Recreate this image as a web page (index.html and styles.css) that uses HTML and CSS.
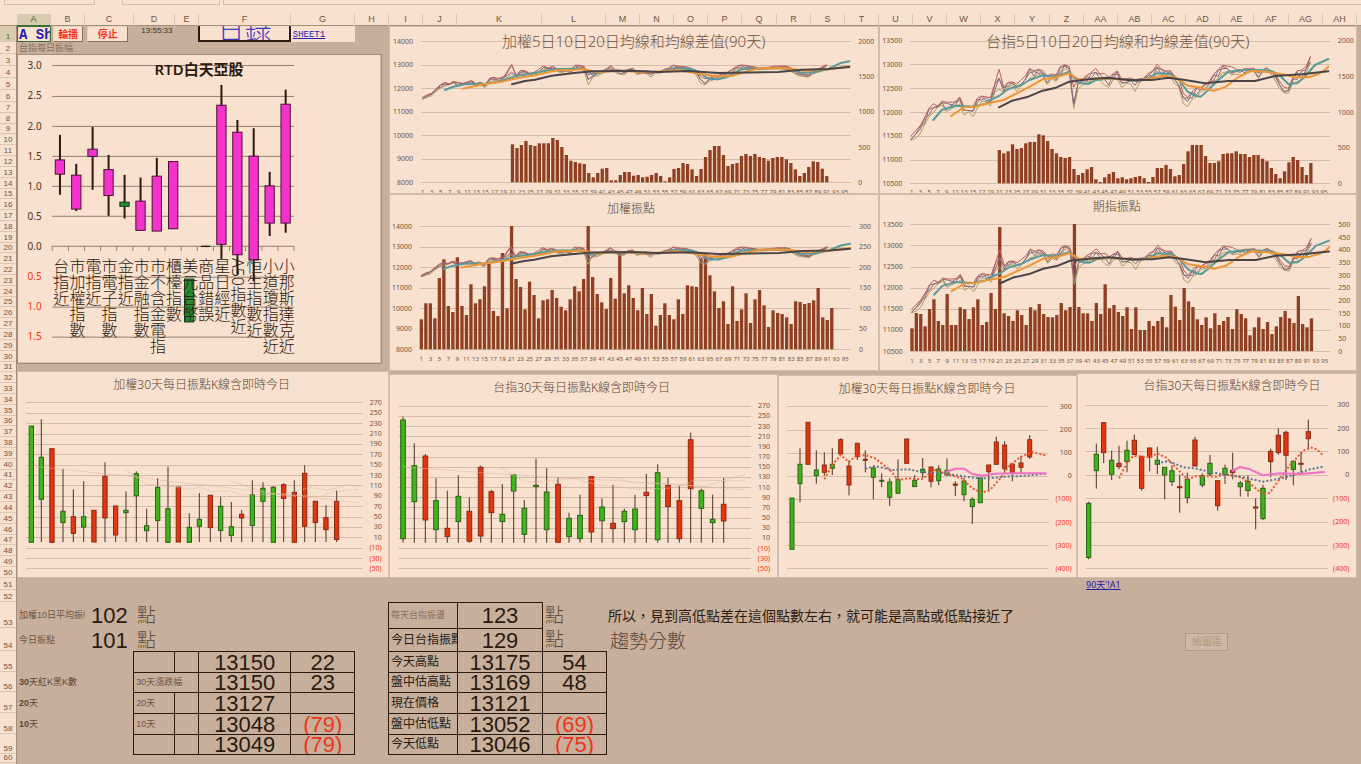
FILE: index.html
```html
<!DOCTYPE html>
<html lang="zh-Hant">
	<head>
		<meta charset="UTF-8" />
		<meta name="viewport" content="width=device-width, initial-scale=1.0" />
		<title>台指每日振幅</title>
		<link rel="stylesheet" href="styles.css">
	</head>
	<body>
		<div class="formula-bar"><span></span><span></span><span></span></div>
		<div class="col-head" id="col-head"></div>

		<div class="sheet">
			<div class="row-nums" id="rows-upper"></div>
			<main class="upper">
				<div class="charts-top">
					<section class="left">
						<div class="row-one">
							<div class="cell-a1">A Sheet</div>
							<div class="cell-btn"><button type="button">輪播</button></div>
							<div class="cell-btn"><button type="button">停止</button></div>
							<time>13:55:33</time>
							<a class="index-link" href="#index">日錄</a>
							<a class="sheet-link" href="#sheet1">SHEET1</a>
						</div>
						<div class="row-two">台指每日振幅</div>
						<svg class="chart rtd" id="rtd"></svg>
					</section>
					<section class="pair">
						<svg class="chart" id="twAvg"></svg>
						<svg class="chart" id="twAmp"></svg>
					</section>
					<section class="pair">
						<svg class="chart" id="txAvg"></svg>
						<svg class="chart" id="txAmp"></svg>
					</section>
				</div>
				<div class="charts-bottom">
					<svg class="chart" id="k1"></svg>
					<svg class="chart" id="k2"></svg>
					<svg class="chart" id="k3"></svg>
					<svg class="chart" id="k4"></svg>
				</div>
			</main>
		</div>

		<div class="sheet sheet-lower">
			<div class="row-nums" id="rows-lower"></div>
			<div class="lower">
				<div class="link-row"><a href="#a1">90天'!A1</a></div>
				<div class="blocks">
					<section>
						<div class="avg r53"><span class="small">加權10日平均振幅</span><b>102</b><i>點</i></div>
						<div class="avg r54"><span class="small">今日振點</span><b>101</b><i>點</i></div>
						<div class="days">
							<div class="day-names">
								<span></span>
								<span><b>30</b>天紅K黑K數</span>
								<span><b>20</b>天</span>
								<span><b>10</b>天</span>
							</div>
							<table class="grid grid-left">
								<colgroup><col class="c41"><col class="c24"><col class="c92"><col class="c64"></colgroup>
								<tr><td></td><td></td><td>13150</td><td>22</td></tr>
								<tr class="short"><th colspan="2">30天漲跌幅</th><td>13150</td><td>23</td></tr>
								<tr><th>20天</th><td></td><td>13127</td><td></td></tr>
								<tr><th>10天</th><td></td><td>13048</td><td class="neg">(79)</td></tr>
								<tr class="short"><td></td><td></td><td>13049</td><td class="neg">(79)</td></tr>
							</table>
						</div>
					</section>
					<section>
						<table class="grid grid-right">
							<colgroup><col class="c68"><col class="c85"><col class="c64"></colgroup>
							<tr class="r53"><th class="faint">每天台指振盪</th><td>123</td><td class="unit">點</td></tr>
							<tr class="r54"><th>今日台指振點</th><td>129</td><td class="unit">點</td></tr>
							<tr><th>今天高點</th><td>13175</td><td>54</td></tr>
							<tr class="short"><th>盤中估高點</th><td>13169</td><td>48</td></tr>
							<tr><th>現在價格</th><td>13121</td><td></td></tr>
							<tr><th>盤中估低點</th><td>13052</td><td class="neg">(69)</td></tr>
							<tr class="short"><th>今天低點</th><td>13046</td><td class="neg">(75)</td></tr>
						</table>
					</section>
					<section class="notes">
						<p class="note">所以，見到高低點差在這個點數左右，就可能是高點或低點接近了</p>
						<div class="trend"><span>趨勢分數</span><button type="button">繪圖區</button></div>
					</section>
				</div>
			</div>
		</div>
		<script src="charts.js"></script>
	</body>
</html>
```
FILE: styles.css
```css
:root {
	--paper: #f8e1ce;
	--cell: #c7af9b;
	--line: #a58c7b;
	--ink: #2b1a10;
	--soft: #6f5443;
	--red: #f0341a;
	--cjk: "Noto Sans", "Noto Sans CJK TC", sans-serif;
}
* {
	box-sizing: border-box;
}
body {
	margin: 0;
	background-color: var(--cell);
	color: var(--ink);
	font-family: "Liberation Sans", "Noto Sans CJK TC", sans-serif;
	overflow: hidden;
}
.formula-bar {
	display: flex;
	gap: 3px;
	height: 14px;
	padding: 0 0 9px 4px;
	background-color: var(--paper);
}
.formula-bar span {
	width: 91px;
	border: 1px solid #d6bfae;
	border-top: 0;
}
.formula-bar span:nth-child(2) {
	width: 98px;
	margin-left: 24px;
}
.formula-bar span:nth-child(3) {
	flex: 1;
	border-right: 0;
}

/* column letters */
.col-head {
	display: grid;
	height: 12px;
	padding-left: 17px;
	background-color: var(--paper);
	border-bottom: 1px solid var(--line);
	font-size: 9px;
	line-height: 11px;
	text-align: center;
	color: var(--soft);
}
.col-head span {
	border-right: 1px solid #dcc6b5;
}
.col-head span:first-child {
	background-color: #d9cbb0;
	border-bottom: 1px solid #3d6b35;
	color: #3d6b35;
}

.sheet {
	display: flex;
	align-items: stretch;
}
.sheet-lower {
	height: 186px;
}
.row-nums {
	display: flex;
	flex: 0 0 17px;
	flex-direction: column;
	background-color: var(--paper);
	border-right: 1px solid var(--line);
	font-size: 8px;
	text-align: center;
	color: var(--soft);
}
.row-nums span {
	display: flex;
	flex: 1 1 0;
	min-height: 0;
	align-items: flex-end;
	justify-content: center;
	border-bottom: 1px solid #dcc6b5;
	line-height: 9px;
}
.row-nums .h9 { flex: 0 0 9px; }
.row-nums .h11 { flex: 0 0 11px; }
.row-nums .h12 { flex: 0 0 12px; }
.row-nums .h16 { flex: 0 0 16px; }
.row-nums .h20 { flex: 0 0 20px; }
.row-nums .h21 { flex: 0 0 21px; }
.row-nums .h23 { flex: 0 0 23px; }
.row-nums .h26 { flex: 0 0 26px; }
.row-nums .active {
	background-color: #d9cbb0;
	color: #3d6b35;
}
.upper,
.lower {
	flex: 1;
	min-width: 0;
}

/* charts */
.charts-top {
	display: grid;
	grid-template-columns: 372fr 490fr 478fr 4fr;
}
.charts-bottom {
	display: grid;
	grid-template-columns: 372fr 389fr 299fr 280fr 4fr;
	align-items: end;
}
.charts-top > *,
.charts-bottom > * {
	min-width: 0;
}
.chart {
	display: block;
	width: 100%;
	background-color: var(--paper);
	overflow: hidden;
	font-family: var(--cjk);
}
.chart.rtd {
	width: 98%;
}
.frame { fill: none; stroke: #d3bba9; stroke-width: 2; }
.rtd .frame { stroke: var(--line); }
.chart text { fill: var(--soft); text-anchor: middle; dominant-baseline: central; }
.chart .t12 { font-size: 12px; font-weight: 300; fill: #5e4535; }
.chart .t15 { font-size: 15px; font-weight: 300; }
.chart .tb { font-size: 15px; font-weight: 600; fill: var(--ink); }
.chart .ax { font-size: 7px; }
.chart .ax6 { font-size: 6px; }
.chart .big { font-size: 10px; fill: #4a3425; }
.chart .neg { fill: var(--red); }
.chart .end { text-anchor: end; }
.chart .start { text-anchor: start; }
.chart .vert { writing-mode: vertical-rl; text-anchor: start; dominant-baseline: central; font-size: 16px; font-weight: 300; fill: var(--ink); }
.gl { stroke: #d5bcaa; stroke-width: 1; }
.gl-dark { stroke: #967f6e; stroke-width: 1; }
.bar { fill: #8f3f22; }
.ln { fill: none; stroke-linejoin: round; stroke-linecap: round; }
.hi { stroke: #b8605c; }
.cl { stroke: #8b6a80; }
.lo { stroke: #aaa062; }
.m5 { stroke: #5a9a9c; stroke-width: 2; }
.m10 { stroke: #ee9636; stroke-width: 2; }
.m20 { stroke: #4b4448; stroke-width: 2; }
.thin { stroke: #dfb8a4; stroke-width: 1; stroke-dasharray: 1 1; stroke-linecap: butt; }
.dot-red { stroke: #e8582e; stroke-width: 2; stroke-dasharray: 2 2; stroke-linecap: butt; }
.dot-blue { stroke: #5d7790; stroke-width: 2; stroke-dasharray: 2 2; stroke-linecap: butt; }
.pink { stroke: #f070c4; stroke-width: 2; }
.wick { stroke: #4a3020; stroke-width: 1; }
.wick2 { stroke: #2b1a10; stroke-width: 2; }
.g { fill: #3eb51c; stroke: #2a6412; }
.r { fill: #e3350f; stroke: #8c2a10; }
.m { fill: #f532cb; stroke: #4d1035; }
.d { fill: #268a33; stroke: #1a3a18; }
.k { fill: #2b1a10; }

/* first two sheet rows */
.row-one {
	display: grid;
	grid-template-columns: 34fr 34fr 49fr 64fr 92fr 64fr 34fr;
	height: 16px;
}
.row-one > * {
	min-width: 0;
	overflow: hidden;
	white-space: nowrap;
}
.cell-a1 {
	padding-left: 1px;
	border: 1px solid #3d6b35;
	background-color: var(--paper);
	color: #2420b0;
	font: bold 14px/16px "Liberation Mono", monospace;
}
.cell-btn {
	padding: 0 2px;
}
.cell-btn + .cell-btn {
	padding-right: 6px;
}
.cell-btn button {
	display: block;
	width: 100%;
	height: 16px;
	padding: 0;
	border: 1px solid #e8d2c0;
	border-right-color: #8a715f;
	border-bottom-color: #8a715f;
	background-color: var(--paper);
	color: var(--red);
	font: bold 10px/14px "Noto Sans CJK TC", sans-serif;
}
.row-one time {
	padding-left: 7px;
	font-size: 8px;
	line-height: 9px;
	color: #4a3425;
}
.index-link {
	display: flex;
	align-items: flex-end;
	justify-content: center;
	border: 2px solid var(--ink);
	border-top: 0;
	background-color: var(--paper);
	color: #4038c0;
	font: 300 27px/22px "Noto Sans CJK TC", sans-serif;
	text-decoration: none;
}
.sheet-link {
	padding-left: 2px;
	background-color: var(--paper);
	color: #2420b0;
	font: 9px/18px "Liberation Mono", monospace;
}
.row-two {
	height: 12px;
	padding-left: 2px;
	font-size: 9px;
	line-height: 12px;
	color: #8a7160;
}

/* lower part */
.link-row {
	display: grid;
	grid-template-columns: 1069fr 275fr;
	height: 24px;
}
.link-row a {
	grid-column: 2;
	font: 9px/13px var(--cjk);
	color: #2420b0;
}
.blocks {
	display: grid;
	grid-template-columns: 371fr 218fr 755fr;
}
.blocks > section {
	min-width: 0;
}
.avg {
	display: grid;
	grid-template-columns: 68fr 49fr 254fr;
	align-items: center;
	line-height: 25px;
}
.avg .small {
	padding-left: 2px;
	overflow: hidden;
	white-space: nowrap;
	font-size: 9px;
	color: #6d5545;
}
.avg b {
	padding-left: 6px;
	font-size: 22px;
	font-weight: normal;
}
.avg i {
	padding-left: 3px;
	font-size: 19px;
	font-style: normal;
	font-weight: 300;
	color: #5e4737;
}
.r53 { height: 26px; }
.r54 { height: 23px; }
.days {
	display: grid;
	grid-template-columns: 117fr 221fr 33fr;
}
.day-names {
	display: grid;
	grid-auto-rows: 21px;
	padding-left: 2px;
	font-size: 9px;
	line-height: 20px;
	color: #5e4737;
}
.grid {
	width: 100%;
	border-collapse: collapse;
	table-layout: fixed;
}
.c24 { width: 24px; }
.c41 { width: 41px; }
.c64 { width: 64px; }
.c68 { width: 69px; }
.c85 { width: 85px; }
.c92 { width: 92px; }
.grid tr {
	height: 21px;
}
.grid tr.short { height: 20px; }
.grid tr.r53 { height: 26px; }
.grid tr.r54 { height: 23px; }
.grid td,
.grid th {
	padding: 0;
	border: 1px solid var(--ink);
	overflow: hidden;
	white-space: nowrap;
	text-align: center;
	font-size: 22px;
	font-weight: normal;
	line-height: 19px;
}
.grid th {
	padding-left: 2px;
	text-align: left;
	font-size: 9px;
	color: #6d5545;
}
.grid-right th {
	font-size: 12px;
	color: var(--ink);
}
.grid-right .faint {
	font-size: 9px;
	color: #8a7160;
}
.grid td.neg {
	color: var(--red);
}
.grid td.unit {
	border-top: 0;
	border-right: 0;
	border-bottom: 0;
	padding-left: 2px;
	text-align: left;
	font-size: 19px;
	font-weight: 300;
	color: #5e4737;
}
.grid .r54 td.unit {
	border-bottom: 1px solid var(--ink);
}
.notes {
	padding-left: 2px;
}
.note {
	margin: 0;
	font-size: 14px;
	line-height: 28px;
}
.trend {
	display: grid;
	grid-template-columns: 577fr 43fr 133fr;
	align-items: center;
	padding-left: 2px;
	font-size: 19px;
	font-weight: 300;
	line-height: 24px;
	color: #5e4737;
}
.trend button {
	height: 18px;
	padding: 0;
	border: 1px solid #b39b88;
	background-color: #cfb8a5;
	font-family: inherit;
	font-size: 10px;
	line-height: 14px;
	color: #b09884;
}
```
FILE: charts.js
```js
// headers
const cols = { A: 34, B: 34, C: 49, D: 41, E: 24, F: 92, G: 64, H: 34, I: 34, J: 34, K: 85, L: 64, M: 34, N: 34, O: 34, P: 34, Q: 35, R: 34, S: 34, T: 34, U: 34, V: 34, W: 34, X: 34, Y: 35, Z: 34, AA: 34, AB: 34, AC: 34, AD: 34, AE: 34, AF: 35, AG: 34, AH: 34 };
const head = document.getElementById('col-head');
head.style.gridTemplateColumns = Object.values(cols).map((w) => `minmax(0,${w}fr)`).join(' ') + ' 4fr';
head.innerHTML = Object.keys(cols).map((c) => `<span>${c}</span>`).join('');

const heights = { 1: 16, 2: 12, 3: 12, 4: 12, 5: 12, 6: 12, 51: 12, 52: 12, 53: 26, 54: 23, 55: 21, 56: 20, 57: 21, 58: 21, 59: 20, 60: 9 };
function rowNums(id, from, to) {
	let out = '';
	for (let i = from; i <= to; i++) {
		out += `<span class="${heights[i] ? 'h' + heights[i] : ''}${i === 1 ? ' active' : ''}">${i}</span>`;
	}
	document.getElementById(id).innerHTML = out;
}
rowNums('rows-upper', 1, 50);
rowNums('rows-lower', 51, 60);

// chart points are stored in thirds of a pixel, counted from the chart's origin
const U = 3;
const pairs = (s) => s.trim().split(/\s+/).map((p) => p.split(',').map(Number));
const nums = (s) => s.split(',').map(Number);

function draw(id, view, origin, body) {
	const svg = document.getElementById(id);
	const X = (v) => +(origin[0] + v / U).toFixed(1);
	const Y = (v) => +(origin[1] + v / U).toFixed(1);
	const t = {
		text: (x, y, s, cls) => `<text x="${X(x)}" y="${Y(y)}" class="${cls}">${s}</text>`,
		grid: (x1, x2, y, cls = 'gl') => `<line x1="${X(x1)}" x2="${X(x2)}" y1="${Math.round(Y(y)) + 0.5}" y2="${Math.round(Y(y)) + 0.5}" class="${cls}"/>`,
		vline: (x, y1, y2, cls) => `<line x1="${X(x)}" x2="${X(x)}" y1="${Y(y1)}" y2="${Y(y2)}" class="${cls}"/>`,
		rect: (x, y, w, y2, cls) => `<rect x="${X(x - w / 2)}" y="${Y(y)}" width="${+(w / U).toFixed(1)}" height="${Math.max(+((y2 - y) / U).toFixed(1), 1)}" class="${cls}"/>`,
		line: (pts, cls) => `<polyline points="${pts.map((p) => X(p[0]) + ',' + Y(p[1])).join(' ')}" class="ln ${cls}"/>`,
	};
	svg.setAttribute('viewBox', view.join(' '));
	svg.innerHTML = body(t) + `<rect class="frame" x="${view[0]}" y="${view[1]}" width="${view[2]}" height="${view[3]}"/>`;
}

// candles: x, high, top, bottom, low, colour
function candles(t, list, w, wick = 'wick') {
	return list.trim().split('\n').map((row) => {
		const [x, hi, top, bot, lo, c] = row.trim().split(' ');
		return t.vline(+x, +hi, +lo, wick) + t.rect(+x, +top, w, +bot, c);
	}).join('');
}

// RTD
const rtdCandles = `180 405 480 523 585 m
229 492 526 628 634 m
278 381 448 470 570 m
326 465 509 587 648 m
374 525 607 620 656 d
422 533 604 692 692 m
471 474 529 694 694 m
520 485 485 687 687 m
568 838 838 967 967 d
617 738 738 742 742 k
665 255 316 734 778 m
713 360 397 765 825 m
762 385 469 781 845 m
810 516 558 670 709 m
858 269 313 670 699 m`;
const rtdNames = ['台指近', '市加權指數', '電指近', '市電子指數', '金指近', '市金融指數', '市不含金電指', '櫃檯指數', '美元台幣', '商品錯誤', '星日經近', 'A50指數近', '恒生指數近', '小道瓊指數近', '小那斯達克近'];
draw('rtd', [17, 54, 365, 310], [0, 0], (t) => {
	let s = '';
	['3.0', '2.5', '2.0', '1.5', '1.0', '0.5', '0.0', '0.5', '1.0', '1.5'].forEach((v, i) => {
		const y = 196 + i * 90.5;
		s += t.grid(157, 883, y, 'gl-dark') + t.text(125, y, v, 'end big' + (i > 6 ? ' neg' : ''));
	});
	for (let i = 0; i <= 15; i++) s += t.vline(157 + i * 48.4, 739, 754, 'gl-dark');
	s += candles(t, rtdCandles, 28, 'wick2');
	rtdNames.forEach((n, i) => (s += t.text(181 + i * 48.4, 775, n, 'vert')));
	return s + t.text(598, 207, 'RTD白天亞股', 'tb');
});

// average lines, weighted index
const tw = {
	hi: pairs('113,292 127,284 140,280 153,266 167,254 180,247 193,252 205,244 220,248 235,250 260,242 273,251 285,246 300,254 315,234 327,232 341,236 358,228 380,193 394,226 407,211 421,213 434,220 448,217 462,208 475,197 489,204 503,199 516,206 530,210 543,207 557,210 570,196 584,196 597,199 610,225 624,218 637,216 651,214 665,206 677,197 691,209 705,210 718,215 730,208 743,205 757,217 771,216 784,212 798,216 811,214 825,215 838,208 852,204 865,195 879,198 905,201 920,206 933,211 946,228 960,236 973,232 986,226 1000,226 1013,222 1027,217 1040,209 1054,199 1067,195 1081,196 1095,199 1121,203 1148,202 1175,198 1202,198 1215,202 1229,211 1242,218 1256,222 1270,225 1283,213 1296,209 1310,202 1324,194'),
	lo: pairs('113,297 127,292 140,287 153,274 167,264 180,258 193,254 205,249 220,258 235,253 260,250 273,261 285,254 300,263 315,247 327,240 341,244 358,238 380,222 394,232 407,220 421,218 434,226 448,222 462,218 475,209 489,210 503,208 516,214 530,219 543,213 557,218 570,208 584,205 597,211 610,255 624,230 637,228 651,221 665,214 677,208 691,218 705,223 718,224 730,214 743,214 757,224 771,220 784,220 798,231 811,219 825,219 838,215 852,212 865,206 879,206 905,208 920,215 933,224 946,248 960,255 973,244 986,239 1000,236 1013,231 1027,226 1040,220 1054,211 1067,206 1081,205 1095,207 1121,209 1148,207 1175,206 1202,206 1215,212 1229,221 1242,228 1256,229 1270,232 1283,222 1296,217 1310,208 1324,200'),
	m5: pairs('180,270 205,260 240,253 300,251 341,245 394,228 434,222 475,214 516,207 570,206 600,208 620,222 660,214 740,212 820,217 865,206 915,206 940,215 970,236 1000,238 1030,230 1070,208 1120,205 1180,204 1215,207 1250,218 1290,217 1330,207 1365,190 1393,184'),
	m10: pairs('233,266 300,252 350,245 400,234 450,226 516,211 570,209 597,207 630,217 700,212 790,217 880,210 950,222 990,229 1040,228 1090,213 1120,205 1200,204 1260,212 1330,208 1393,199'),
	m20: pairs('381,253 420,243 450,239 500,227 560,220 620,214 740,212 820,216 910,213 1000,219 1180,216 1250,209 1330,207 1393,201'),
};
// futures
const tx = {
	hi: pairs('108,408 122,392 135,378 148,355 162,325 175,311 188,318 201,303 214,307 240,306 254,291 267,320 281,318 294,320 307,295 320,288 333,291 346,293 360,250 372,208 386,262 399,247 412,246 425,252 438,240 451,228 464,205 477,213 490,208 503,212 516,228 530,222 543,225 556,200 569,194 583,200 596,262 609,238 622,238 635,226 648,218 662,205 675,222 688,220 701,232 714,222 727,213 740,238 754,236 767,234 780,240 793,236 806,235 820,220 833,213 846,193 859,207 872,213 886,212 899,228 912,238 925,280 938,292 951,275 964,263 977,262 990,253 1004,242 1017,222 1030,208 1043,196 1057,198 1070,200 1083,208 1096,210 1110,206 1123,206 1137,204 1150,218 1163,210 1174,203 1187,212 1200,220 1213,243 1227,262 1240,265 1253,235 1266,213 1280,210 1293,200 1306,170'),
	lo: pairs('108,421 122,415 135,402 148,375 162,350 175,338 188,322 201,315 214,335 240,320 254,312 267,345 281,335 294,350 307,325 320,303 333,305 346,318 360,275 372,268 386,276 399,262 412,255 425,274 438,258 451,250 464,235 477,232 490,222 503,228 516,254 530,236 543,244 556,225 569,205 583,215 596,325 609,268 622,255 635,252 648,240 662,232 675,240 688,255 701,262 714,240 727,235 740,263 754,250 767,252 780,275 793,248 806,240 820,235 833,232 846,212 859,225 872,225 886,230 899,250 912,262 925,310 938,320 951,298 964,290 977,275 990,270 1004,258 1017,245 1030,235 1043,218 1057,215 1070,225 1083,222 1096,225 1110,222 1123,215 1137,215 1150,235 1163,215 1174,216 1187,220 1200,240 1213,265 1227,278 1240,280 1253,250 1266,245 1280,240 1293,220 1306,190'),
	m5: pairs('175,360 200,330 240,317 290,320 330,312 346,300 372,288 399,268 438,255 464,240 503,226 543,230 583,215 609,248 640,252 662,240 700,236 740,238 780,242 820,235 846,220 886,222 912,240 938,275 960,287 977,290 1000,270 1030,240 1060,215 1100,210 1150,210 1187,212 1213,225 1240,252 1266,250 1290,230 1320,195 1360,177'),
	m10: pairs('228,348 267,322 300,320 346,308 386,300 425,280 464,260 503,238 543,232 583,220 609,237 660,238 700,235 760,240 800,240 860,228 900,232 938,257 970,262 1015,272 1050,262 1090,232 1130,212 1180,216 1230,224 1260,232 1300,232 1330,222 1350,210 1360,200'),
	m20: pairs('372,322 412,302 460,290 503,272 543,263 583,245 640,238 700,233 760,240 830,240 880,233 930,240 990,250 1060,243 1140,243 1200,228 1280,223 1360,214'),
};

function avgLines(t, set, map) {
	// opening and closing prices wander between the day's high and low
	const mid = (a, b) => set.hi.map((p, i) => [p[0], p[1] + (set.lo[i][1] - p[1]) * (i % a === 0 ? 0.8 : i % b === 0 ? 0.1 : 0.45)]);
	return t.line(set.lo.map(map), 'lo') + t.line(mid(3, 2).map(map), 'cl') + t.line(mid(4, 3).map(map), 'cl') + t.line(set.hi.map(map), 'hi') +
		t.line(set.m5.map(map), 'm5') + t.line(set.m10.map(map), 'm10') + t.line(set.m20.map(map), 'm20');
}

function mixed(id, view, origin, o) {
	draw(id, view, origin, (t) => {
		let s = '';
		o.left.forEach((v, i) => {
			const y = o.top + ((o.base - o.top) * i) / (o.left.length - 1);
			s += t.grid(o.x1 - 5, o.x2, y) + t.text(o.labelL, y, v, 'ax end');
		});
		o.right.forEach((v, i) => {
			const y = o.top + ((o.base - o.top) * i) / (o.right.length - 1);
			s += t.text(o.labelR, y, v, 'ax start');
		});
		o.bars.forEach((y, i) => (s += t.rect(o.x1 + (i + o.first - 1) * o.step, y, 10, o.base, 'bar')));
		for (let i = 1; i < 96; i += 2) s += t.text(o.x1 + (i - 1) * o.step, o.labelY, i, 'ax6');
		return s + avgLines(t, o.set, o.map) + t.text(o.titleX, o.titleY, o.title, o.titleCls);
	});
}

mixed('twAvg', [389, 26, 490, 168], [385, 0], {
	title: '加權5日10日20日均線和均線差值(90天)', titleX: 746, titleY: 122, titleCls: 't15',
	left: [14000, 13000, 12000, 11000, 10000, 9000, 8000], right: [2000, 1500, 1000, 500, 0],
	top: 124, base: 547, x1: 113, x2: 1398, step: 13.47, labelL: 84, labelR: 1420, labelY: 577, first: 21,
	bars: nums('433,444,435,423,435,438,430,430,430,414,420,441,465,482,486,490,492,519,532,519,506,504,541,541,525,516,516,527,525,532,530,525,519,528,544,532,507,504,489,492,508,528,507,471,450,438,438,465,498,492,489,468,462,468,462,471,474,482,474,471,471,478,489,508,528,519,501,484,486,506,528'),
	set: tw, map: (p) => p,
});
mixed('twAmp', [389, 194, 490, 177], [385, 190], {
	title: '加權振點', titleX: 738, titleY: 54, titleCls: 't12',
	left: [14000, 13000, 12000, 11000, 10000, 9000, 8000], right: [300, 250, 200, 150, 100, 50, 0],
	top: 109, base: 478, x1: 109, x2: 1398, step: 13.53, labelL: 81, labelR: 1422, labelY: 508, first: 1,
	bars: nums('388,340,340,385,264,208,348,366,202,348,375,283,340,328,289,222,363,378,189,355,108,267,291,358,275,315,385,331,328,300,324,350,361,328,289,304,267,108,261,312,337,357,264,326,188,310,286,324,361,294,372,312,407,375,340,375,388,328,372,286,289,291,205,190,256,304,354,334,402,289,393,358,310,399,328,300,346,411,361,369,372,382,402,334,336,342,339,331,294,382,390,354'),
	set: tw, map: (p) => [109 + (p[0] - 113) * 1.005, 109 + (p[1] - 124) * 0.872],
});
mixed('txAvg', [879, 26, 478, 168], [875, 0], {
	title: '台指5日10日20日均線和均線差值(90天)', titleX: 728, titleY: 123, titleCls: 't15',
	left: [13500, 13000, 12500, 12000, 11500, 11000, 10500], right: [2000, 1500, 1000, 500, 0],
	top: 122, base: 550, x1: 110, x2: 1366, step: 13.16, labelL: 82, labelR: 1388, labelY: 577, first: 21,
	bars: nums('450,460,454,433,447,444,430,426,426,403,406,423,447,460,471,474,471,507,525,519,508,501,538,546,532,522,516,535,532,538,535,531,528,535,546,531,504,504,495,507,529,525,492,454,435,435,435,468,489,489,484,462,460,460,454,462,462,471,465,465,476,484,504,522,535,514,487,471,480,501,525,489'),
	set: tx, map: (p) => p,
});
mixed('txAmp', [879, 194, 478, 177], [875, 190], {
	title: '期指振點', titleX: 725, titleY: 48, titleCls: 't12',
	left: [13500, 13000, 12500, 12000, 11500, 11000, 10500], right: [500, 450, 400, 350, 300, 250, 200, 150, 100, 50, 0],
	top: 103, base: 483, x1: 111, x2: 1366, step: 13.17, labelL: 83, labelR: 1390, labelY: 513, first: 1,
	bars: nums('415,369,372,409,357,328,393,405,312,405,405,352,358,387,352,328,405,396,309,357,111,370,378,393,361,375,405,352,361,342,372,381,382,375,339,361,351,102,351,370,370,393,339,372,283,355,345,366,378,352,417,352,420,420,393,408,393,381,412,315,350,390,294,334,351,388,405,382,415,370,405,393,381,417,358,372,385,436,412,382,417,396,432,409,381,363,385,399,318,402,412,385'),
	set: tx, map: (p) => [p[0] + 2, 103 + (p[1] - 122) * 0.888],
});

// candle charts
function kChart(id, view, o) {
	draw(id, view, [o.ox, 370], (t) => {
		let s = '';
		for (let v = o.max, i = 0; v >= o.min; v -= o.stepV, i++) {
			const y = o.top + ((595 - o.top) * (o.max - v)) / (o.max - o.min);
			s += t.grid(o.x1, o.x2, y) + t.text(o.label, y, v < 0 ? `(${-v})` : v, 'ax ' + (o.end ? 'end' : 'start') + (v < 0 ? ' neg' : ''));
		}
		s += candles(t, o.data, o.w);
		o.lines.forEach(([cls, pts]) => (s += t.line(pairs(pts), cls)));
		return s + t.text(o.titleX, o.titleY, o.title, 't12');
	});
}
kChart('k1', [17, 371, 372, 207], {
	ox: 0, title: '加權30天每日振點K線含即時今日', titleX: 605, titleY: 42, max: 270, min: -50, stepV: 20, top: 97, x1: 78, x2: 1088, label: 1145, end: true, w: 13,
	data: `94 168 168 517 517 g
124 148 262 388 516 g
156 236 236 517 517 r
189 296 424 458 516 g
220 358 440 490 516 r
251 334 440 471 516 g
282 421 421 516 516 r
315 277 319 444 516 r
347 408 408 495 516 r
378 364 421 428 516 g
409 304 311 377 516 g
440 416 467 482 516 g
473 325 352 452 516 g
504 290 416 517 517 g
535 351 351 516 516 r
568 430 472 517 517 g
598 369 448 469 516 g
631 376 376 473 516 r
662 380 409 482 516 g
694 396 470 496 516 g
725 420 433 444 516 r
757 331 374 466 516 g
789 337 355 394 516 g
820 348 352 517 517 g
851 340 344 385 516 r
883 331 367 517 517 r
914 286 310 469 516 r
946 394 394 458 516 r
978 406 443 479 516 r
1010 362 394 509 516 r`,
	lines: [
		['thin', '110,290 250,305 400,320 520,335 700,355 850,375 960,385 1075,398'],
		['thin', '378,300 440,343 520,350 570,358 600,352 635,365 690,362 725,375 850,372 900,360 935,353 980,360 1010,355 1040,345 1075,349'],
		['thin', '690,333 750,352 800,368 850,374 960,380 1000,365 1075,358'],
	],
});
kChart('k2', [389, 374, 389, 204], {
	ox: 385, title: '台指30天每日振點K線含即時今日', titleX: 590, titleY: 53, max: 270, min: -50, stepV: 20, top: 107, x1: 40, x2: 1098, label: 1155, end: true, w: 14,
	data: `54 140 150 506 518 g
88 220 287 395 518 g
121 252 258 450 518 r
153 325 392 479 518 g
187 362 475 500 518 r
220 316 379 455 518 g
253 382 424 514 518 r
287 287 292 498 518 r
319 360 365 428 518 r
352 342 433 455 518 g
386 314 314 363 518 g
418 390 415 493 518 g
453 266 346 350 518 g
485 295 366 479 518 g
519 322 343 517 517 r
552 428 445 500 518 g
585 374 436 506 518 g
619 320 320 486 518 r
651 385 411 452 518 g
684 344 460 476 518 r
718 416 424 455 518 g
750 374 417 479 518 g
784 312 367 377 518 r
818 283 308 509 518 g
849 323 346 410 518 r
883 348 392 506 518 r
917 188 209 356 518 r
949 356 362 415 518 g
983 374 448 458 518 g
1016 324 403 453 518 r`,
	lines: [
		['thin', '55,290 150,298 350,312 550,325 700,332 900,345 1080,360'],
		['thin', '350,295 385,315 420,335 500,333 560,325 640,345 700,350 760,358 850,355 910,340 925,330 1080,333'],
		['thin', '685,320 740,338 850,342 960,350 1020,330 1080,313'],
	],
});
kChart('k3', [778, 375, 299, 203], {
	ox: 775, title: '加權30天每日振點K線含即時今日', titleX: 456, titleY: 56, max: 300, min: -400, stepV: 100, top: 109, x1: 36, x2: 820, label: 890, end: true, w: 12,
	data: `51 384 384 538 538 g
75 235 283 341 397 g
99 157 157 283 283 r
124 241 300 317 341 g
148 247 285 307 317 r
172 235 283 295 315 g
197 205 209 252 252 r
222 271 288 345 376 r
247 220 220 260 270 r
271 241 268 271 307 r
295 288 294 322 388 g
320 310 331 334 352 g
344 325 336 382 408 g
369 268 328 370 370 g
395 207 207 280 280 r
419 315 331 350 350 g
443 264 298 308 324 g
468 291 291 334 352 r
491 286 297 332 346 g
516 265 301 315 318 g
541 334 342 346 378 r
567 324 333 374 394 g
592 382 388 410 462 g
616 324 324 398 398 g
641 285 285 305 364 r
664 200 216 283 283 r
689 214 225 296 312 r
712 280 282 308 334 r
738 258 279 292 311 r
764 195 209 261 266 r`,
	lines: [
		['dot-red', '148,328 172,285 197,255 222,276 240,260 270,255 300,265 345,300 369,330 400,325 440,328 480,300 516,312 560,325 592,355 620,368 645,360 680,320 700,290 735,262 770,246 812,256'],
		['dot-blue', '271,296 300,288 350,300 400,298 440,306 500,310 560,318 600,324 640,325 690,320 740,318 812,311'],
		['pink', '516,305 540,296 567,296 592,312 620,317 660,311 720,310 812,310'],
	],
});
kChart('k4', [1077, 373, 280, 205], {
	ox: 1070, title: '台指30天每日振點K線含即時今日', titleX: 486, titleY: 45, max: 300, min: -400, stepV: 100, top: 104, x1: 47, x2: 774, label: 838, end: true, w: 13,
	data: `56 395 400 563 568 g
79 221 253 302 356 g
101 158 158 248 279 r
125 242 271 313 330 g
147 227 280 290 298 r
171 212 241 275 307 g
193 194 211 254 254 r
215 259 259 355 362 r
239 233 234 261 304 r
262 230 271 283 312 g
284 292 292 315 388 g
306 286 302 335 348 g
329 314 350 352 428 r
352 308 328 383 400 g
375 200 210 288 288 r
397 310 317 345 352 g
420 255 280 312 318 g
443 332 332 407 422 r
465 284 295 314 342 g
488 248 301 308 328 r
511 333 339 350 380 g
534 316 334 362 380 g
557 385 411 413 478 r
579 344 355 446 450 g
602 236 244 275 322 r
625 175 196 248 254 r
648 182 187 256 330 r
670 270 274 298 346 g
693 246 280 282 311 r
715 149 185 206 240 r`,
	lines: [
		['dot-red', '147,325 170,280 190,258 240,262 262,250 290,264 320,295 352,328 380,318 440,320 465,312 511,320 545,345 579,373 600,368 630,325 660,285 700,242 720,232 740,238 758,255'],
		['dot-blue', '262,280 295,273 340,292 375,295 420,306 465,314 520,322 579,335 620,328 670,315 720,298 762,290'],
		['pink', '488,302 511,291 540,298 579,316 630,310 690,312 762,306'],
	],
});
```
